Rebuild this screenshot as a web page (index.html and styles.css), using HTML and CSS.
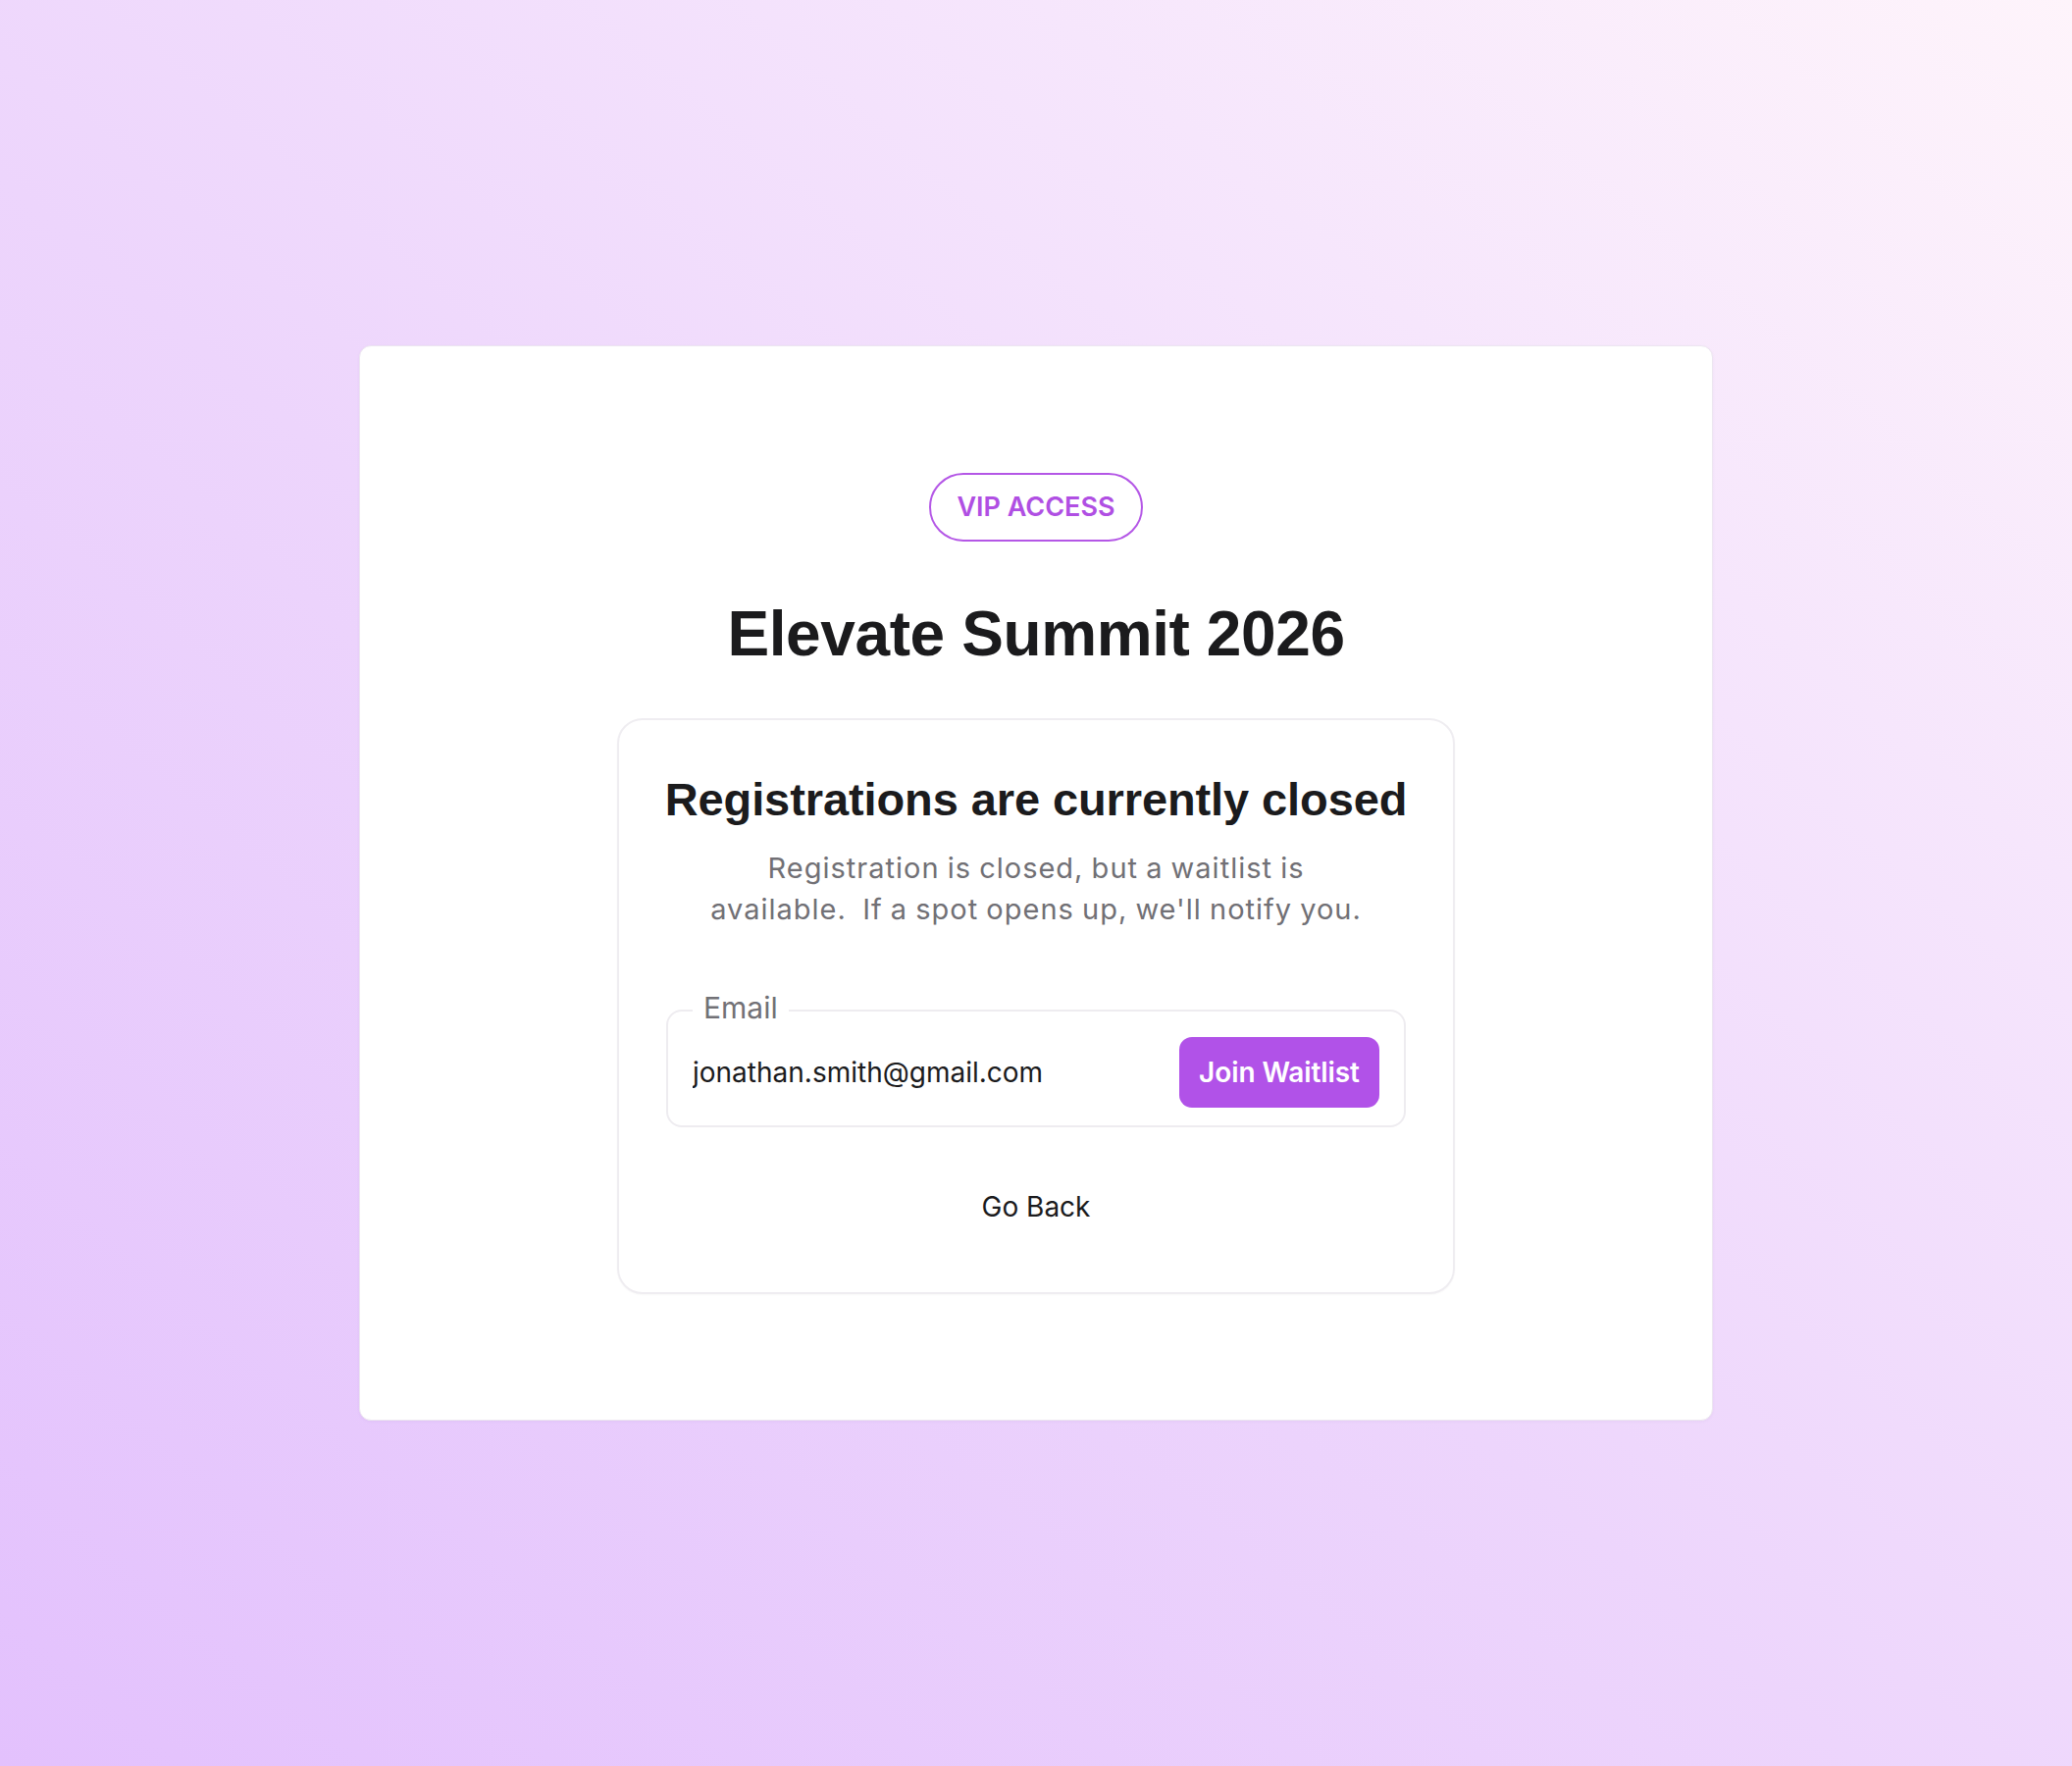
FILE: index.html
```html
<!DOCTYPE html>
<html lang="en">
<head>
<meta charset="utf-8">
<title>Elevate Summit 2026</title>
<link rel="stylesheet" href="styles.css">
</head>
<body>
<main class="page">
  <section class="card">
    <span class="badge">VIP ACCESS</span>
    <h1 class="title">Elevate Summit 2026</h1>
    <div class="panel">
      <h2 class="panel-title">Registrations are currently closed</h2>
      <p class="panel-text">Registration is closed, but a waitlist is available.&nbsp; If a spot opens up, we'll notify you.</p>
      <form class="field" onsubmit="return false;">
        <label class="field-label" for="email">Email</label>
        <input class="field-input" id="email" type="email" value="jonathan.smith@gmail.com">
        <button class="field-button" type="submit">Join Waitlist</button>
      </form>
      <a class="back" href="#">Go Back</a>
    </div>
  </section>
</main>
</body>
</html>
```

FILE: styles.css
```css
* {
  box-sizing: border-box;
}

html, body {
  margin: 0;
  padding: 0;
}

body {
  min-height: 100vh;
  font-family: Inter, "Noto Sans", sans-serif;
  background: linear-gradient(to top right, #e3c1fd 0%, #edd5fc 45%, #f6e6fc 75%, #fef4fb 100%);
  color: #1b1b1d;
}

.page {
  min-height: 100vh;
  display: flex;
  align-items: center;
  justify-content: center;
}

.card {
  width: 1380px;
  background: #ffffff;
  border: 1px solid #ece6f0;
  border-radius: 12px;
  box-shadow: 0 1px 3px rgba(120, 80, 160, 0.06);
  padding: 129px 0 128px;
  display: flex;
  flex-direction: column;
  align-items: center;
}

.badge {
  display: inline-flex;
  align-items: center;
  justify-content: center;
  height: 70px;
  padding: 0 26px;
  border: 2px solid #b457e6;
  border-radius: 999px;
  color: #b04fe3;
  font-family: Inter, sans-serif;
  font-weight: 600;
  font-size: 27px;
  letter-spacing: 0;
}

.title {
  margin: 56px 0 0;
  font-family: "Liberation Sans", Arial, sans-serif;
  font-weight: 700;
  font-size: 64px;
  line-height: 1.2;
  letter-spacing: -0.4px;
  color: #1b1b1d;
}

.panel {
  width: 854px;
  margin-top: 47px;
  border: 2px solid #efedf1;
  border-radius: 26px;
  padding: 53px 48px 66px;
  display: flex;
  flex-direction: column;
  align-items: center;
  box-shadow: 0 1px 2px rgba(0, 0, 0, 0.03);
}

.panel-title {
  margin: 0;
  font-family: "Liberation Sans", Arial, sans-serif;
  font-weight: 700;
  font-size: 47px;
  line-height: 1.2;
  letter-spacing: -0.1px;
  color: #1b1b1d;
  white-space: nowrap;
}

.panel-text {
  margin: 21px 0 0;
  max-width: 700px;
  text-align: center;
  font-size: 29px;
  line-height: 42px;
  color: #717075;
  letter-spacing: 1px;
  word-spacing: -1px;
}

.field {
  position: relative;
  width: 100%;
  margin: 81px 0 0;
  height: 120px;
  border: 2px solid #eeecf0;
  border-radius: 16px;
  display: flex;
  align-items: center;
  padding: 8px 25px 0 25px;
}

.field-label {
  position: absolute;
  top: -24px;
  left: 25px;
  padding: 0 11px;
  background: #ffffff;
  font-size: 30px;
  line-height: 40px;
  color: #727176;
}

.field-input {
  flex: 1;
  min-width: 0;
  border: none;
  outline: none;
  background: transparent;
  font-family: Inter, sans-serif;
  font-size: 28px;
  color: #1b1b1d;
  padding: 0;
  letter-spacing: 0;
}

.field-button {
  width: 204px;
  height: 72px;
  border: none;
  border-radius: 13px;
  background: #b152e8;
  color: #ffffff;
  font-family: Inter, sans-serif;
  font-weight: 600;
  font-size: 28px;
  letter-spacing: -0.1px;
  cursor: pointer;
}

.back {
  margin-top: 60px;
  font-size: 28px;
  line-height: 42px;
  color: #1b1b1d;
  text-decoration: none;
}
```
